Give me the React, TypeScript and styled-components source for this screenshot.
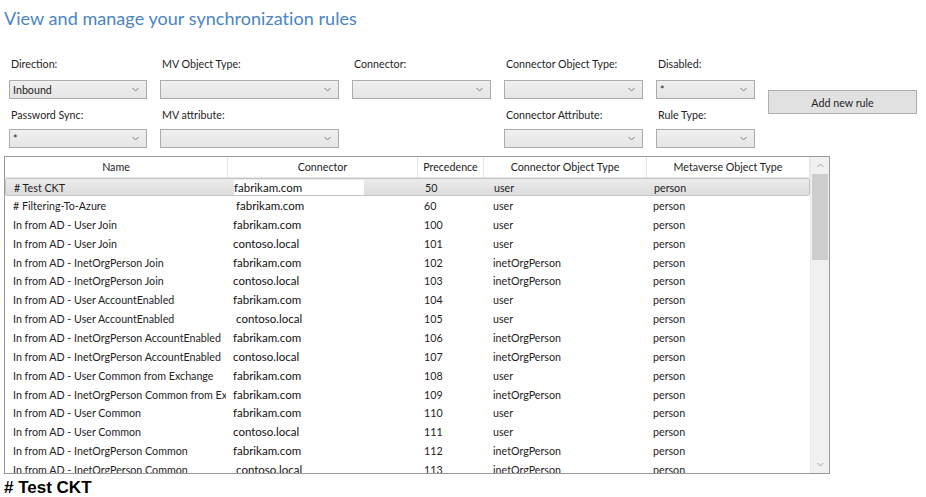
import React from "react";
import styled, { createGlobalStyle } from "styled-components";

const Global = createGlobalStyle`
  html, body { margin: 0; padding: 0; background: #fff; }
  body { font-family: "Lato", "Liberation Sans", sans-serif; color: #1e1e1e; }
  * { box-sizing: border-box; }
`;

const Page = styled.div`
  width: 926px;
  height: 497px;
  overflow: hidden;
  padding: 0 4px;
  position: relative;
`;

const Title = styled.h1`
  margin: 6px 0 0 0;
  height: 24px;
  line-height: 24px;
  font-size: 18px;
  font-weight: 400;
  color: #4a84c4;
  letter-spacing: 0.05px;
`;

const Filters = styled.div`
  margin-top: 26px;
  margin-left: 5px;
  display: grid;
  grid-template-columns: 138px 179px 139px 139px 99px 149px;
  grid-template-rows: 24px 19px 30px 19px;
  column-gap: 13px;
`;

const Label = styled.div<{ $col: number; $row: number; $top?: number }>`
  grid-column: ${(p) => p.$col};
  grid-row: ${(p) => p.$row};
  margin-top: ${(p) => p.$top ?? 0}px;
  margin-left: 2px;
  font-size: 10.7px;
  line-height: 16px;
  color: #1e1e1e;
  align-self: start;
`;

const Select = styled.div<{ $col: number; $row: number }>`
  grid-column: ${(p) => p.$col};
  grid-row: ${(p) => p.$row};
  height: 19px;
  border: 1px solid #acacac;
  background: linear-gradient(#f0f0f0, #e5e5e5);
  display: flex;
  align-items: center;
  justify-content: space-between;
  padding: 0 7px 0 3px;
  font-size: 10.7px;
  color: #1e1e1e;
`;

const AddButton = styled.button`
  grid-column: 6;
  grid-row: 2 / 4;
  align-self: start;
  margin-top: 10px;
  height: 24px;
  border: 1px solid #adadad;
  background: #e1e1e1;
  font-family: inherit;
  font-size: 10.7px;
  color: #1e1e1e;
  padding: 0;
`;

const Chevron = () => (
  <svg width="7" height="5" viewBox="0 0 7 5">
    <path d="M0.5 1 L3.5 4 L6.5 1" fill="none" stroke="#7a7a7a" strokeWidth="1" />
  </svg>
);

const Table = styled.div`
  margin-top: 8px;
  width: 826px;
  height: 318px;
  border: 1px solid #9a9a9a;
  display: flex;
  overflow: hidden;
`;

const Body = styled.div`
  flex: 1;
  display: flex;
  flex-direction: column;
  overflow: hidden;
`;

const cols = [
  { w: 223, pad: 8, title: "Name" },
  { w: 190, pad: 5, title: "Connector" },
  { w: 66, pad: 6, title: "Precedence" },
  { w: 163, pad: 9, title: "Connector Object Type" },
  { w: 163, pad: 6, title: "Metaverse Object Type" },
];

const HeaderRow = styled.div`
  display: flex;
  height: 21px;
  flex-shrink: 0;
`;

const HeaderCell = styled.div<{ $w: number }>`
  width: ${(p) => p.$w}px;
  flex-shrink: 0;
  border-right: 1px solid #e5e5e5;
  border-bottom: 1px solid #e5e5e5;
  text-align: center;
  font-size: 10.7px;
  line-height: 20px;
  color: #1e1e1e;
`;

const Row = styled.div<{ $selected?: boolean }>`
  display: flex;
  height: 18.87px;
  flex-shrink: 0;
  align-items: center;
  position: relative;
  ${(p) =>
    p.$selected
      ? `
    background: linear-gradient(#ececec, #dcdcdc);
    border: 1px solid #c4c4c4;
    border-radius: 2px;
    height: 18px;
  `
      : ""}
`;

const Cell = styled.div<{ $w: number; $pad: number; $gap?: number }>`
  width: ${(p) => p.$w}px;
  flex-shrink: 0;
  padding-left: ${(p) => p.$pad}px;
  margin-right: ${(p) => p.$gap ?? 0}px;
  white-space: nowrap;
  overflow: hidden;
  font-size: 10.7px;
  color: #1e1e1e;
`;

const ConnectorText = styled.span<{ $shift: number; $hl?: boolean }>`
  display: inline-block;
  margin-left: ${(p) => p.$shift}px;
  font-size: 11.5px;
  color: #111;
  ${(p) => (p.$hl ? "background: #fff; width: 130px; line-height: 15px;" : "")}
`;

const Scrollbar = styled.div`
  width: 19px;
  flex-shrink: 0;
  background: #f0f0f0;
  border-left: 1px solid #e8e8e8;
  display: flex;
  flex-direction: column;
  align-items: stretch;
`;

const ScrollArrow = styled.div`
  height: 17px;
  display: flex;
  align-items: center;
  justify-content: center;
`;

const Thumb = styled.div`
  height: 86px;
  margin: 0 1px;
  background: #cdcdcd;
`;

const Track = styled.div`
  flex: 1;
`;

const Detail = styled.div`
  margin-top: 3px;
  font-size: 17px;
  font-weight: 700;
  line-height: 22px;
  color: #000;
  font-family: "Liberation Sans", "Lato", sans-serif;
`;

type R = [string, string, string, string, string, number?];
const rows: R[] = [
  ["# Test CKT", "fabrikam.com", "50", "user", "person", 0],
  ["# Filtering-To-Azure", "fabrikam.com", "60", "user", "person", 3],
  ["In from AD - User Join", "fabrikam.com", "100", "user", "person", 0],
  ["In from AD - User Join", "contoso.local", "101", "user", "person", 0],
  ["In from AD - InetOrgPerson Join", "fabrikam.com", "102", "inetOrgPerson", "person", 0],
  ["In from AD - InetOrgPerson Join", "contoso.local", "103", "inetOrgPerson", "person", 0],
  ["In from AD - User AccountEnabled", "fabrikam.com", "104", "user", "person", 0],
  ["In from AD - User AccountEnabled", "contoso.local", "105", "user", "person", 3],
  ["In from AD - InetOrgPerson AccountEnabled", "fabrikam.com", "106", "inetOrgPerson", "person", 0],
  ["In from AD - InetOrgPerson AccountEnabled", "contoso.local", "107", "inetOrgPerson", "person", 0],
  ["In from AD - User Common from Exchange", "fabrikam.com", "108", "user", "person", 0],
  ["In from AD - InetOrgPerson Common from Exchange", "fabrikam.com", "109", "inetOrgPerson", "person", 0],
  ["In from AD - User Common", "fabrikam.com", "110", "user", "person", 0],
  ["In from AD - User Common", "contoso.local", "111", "user", "person", 0],
  ["In from AD - InetOrgPerson Common", "fabrikam.com", "112", "inetOrgPerson", "person", 0],
  ["In from AD - InetOrgPerson Common", "contoso.local", "113", "inetOrgPerson", "person", 3],
];

export default function App() {
  return (
    <Page>
      <Global />
      <Title>View and manage your synchronization rules</Title>
      <Filters>
        <Label $col={1} $row={1}>Direction:</Label>
        <Label $col={2} $row={1}>MV Object Type:</Label>
        <Label $col={3} $row={1}>Connector:</Label>
        <Label $col={4} $row={1}>Connector Object Type:</Label>
        <Label $col={5} $row={1}>Disabled:</Label>
        <Select $col={1} $row={2}><span>Inbound</span><Chevron /></Select>
        <Select $col={2} $row={2}><span /><Chevron /></Select>
        <Select $col={3} $row={2}><span /><Chevron /></Select>
        <Select $col={4} $row={2}><span /><Chevron /></Select>
        <Select $col={5} $row={2}><span>*</span><Chevron /></Select>
        <AddButton>Add new rule</AddButton>
        <Label $col={1} $row={3} $top={8}>Password Sync:</Label>
        <Label $col={2} $row={3} $top={8}>MV attribute:</Label>
        <Label $col={4} $row={3} $top={8}>Connector Attribute:</Label>
        <Label $col={5} $row={3} $top={8}>Rule Type:</Label>
        <Select $col={1} $row={4}><span>*</span><Chevron /></Select>
        <Select $col={2} $row={4}><span /><Chevron /></Select>
        <Select $col={4} $row={4}><span /><Chevron /></Select>
        <Select $col={5} $row={4}><span /><Chevron /></Select>
      </Filters>
      <Table>
        <Body>
          <HeaderRow>
            {cols.map((c) => (
              <HeaderCell key={c.title} $w={c.w}>{c.title}</HeaderCell>
            ))}
          </HeaderRow>
          {rows.map((r, i) => (
            <Row key={i} $selected={i === 0}>
              <Cell $w={cols[0].w - 2} $pad={cols[0].pad} $gap={2}>{r[0]}</Cell>
              <Cell $w={cols[1].w} $pad={cols[1].pad}>
                <ConnectorText $shift={r[5] ?? 0} $hl={i === 0}>{r[1]}</ConnectorText>
              </Cell>
              <Cell $w={cols[2].w} $pad={cols[2].pad}>{r[2]}</Cell>
              <Cell $w={cols[3].w} $pad={cols[3].pad}>{r[3]}</Cell>
              <Cell $w={cols[4].w} $pad={cols[4].pad}>{r[4]}</Cell>
            </Row>
          ))}
        </Body>
        <Scrollbar>
          <ScrollArrow>
            <svg width="7" height="5" viewBox="0 0 7 5">
              <path d="M0.5 4 L3.5 1 L6.5 4" fill="none" stroke="#a0a0a0" strokeWidth="1" />
            </svg>
          </ScrollArrow>
          <Thumb />
          <Track />
          <ScrollArrow>
            <svg width="7" height="5" viewBox="0 0 7 5">
              <path d="M0.5 1 L3.5 4 L6.5 1" fill="none" stroke="#a0a0a0" strokeWidth="1" />
            </svg>
          </ScrollArrow>
        </Scrollbar>
      </Table>
      <Detail># Test CKT</Detail>
    </Page>
  );
}
